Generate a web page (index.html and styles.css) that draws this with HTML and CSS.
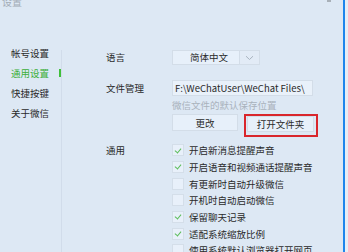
FILE: index.html
```html
<!DOCTYPE html>
<html lang="zh-CN">
<head>
<meta charset="utf-8">
<title>设置</title>
<link rel="stylesheet" href="styles.css">
</head>
<body>
<div class="window">
  <div class="title">设置</div>
  <div class="winbtn"></div>
  <div class="main">
    <nav class="side">
      <div class="nav-item">帐号设置</div>
      <div class="nav-item active">通用设置</div>
      <div class="nav-item">快捷按键</div>
      <div class="nav-item">关于微信</div>
    </nav>
    <div class="content">
      <div class="row row-lang">
        <div class="label">语言</div>
        <div class="select">
          <span class="select-value">简体中文</span>
          <span class="select-arrow"><svg width="9" height="6" viewBox="0 0 9 6"><path d="M1 1.2 L4.5 4.5 L8 1.2" fill="none" stroke="#a9b4c0" stroke-width="1"/></svg></span>
        </div>
      </div>
      <div class="row row-file">
        <div class="label">文件管理</div>
        <div class="file-col">
          <div class="path">F:\WeChatUser\WeChat Files\</div>
          <div class="hint">微信文件的默认保存位置</div>
          <div class="btns">
            <button class="btn">更改</button>
            <span class="highlight"><button class="btn">打开文件夹</button></span>
          </div>
        </div>
      </div>
      <div class="row row-general">
        <div class="label">通用</div>
        <ul class="checks">
          <li><span class="box on"></span>开启新消息提醒声音</li>
          <li><span class="box on"></span>开启语音和视频通话提醒声音</li>
          <li><span class="box"></span>有更新时自动升级微信</li>
          <li><span class="box"></span>开机时自动启动微信</li>
          <li><span class="box on"></span>保留聊天记录</li>
          <li><span class="box on"></span>适配系统缩放比例</li>
          <li><span class="box"></span>使用系统默认浏览器打开网页</li>
        </ul>
      </div>
    </div>
  </div>
</div>
</body>
</html>
```
FILE: styles.css
```css
html, body {
  margin: 0;
  padding: 0;
}
body {
  width: 348px;
  height: 252px;
  overflow: hidden;
  background: #e7eef6;
  font-family: "Noto Sans CJK SC", "Microsoft YaHei", sans-serif;
  font-size: 9.5px;
  color: #2a2a2a;
}
.window {
  position: relative;
  width: 343px;
  height: 252px;
  background: #dde8f4;
  border-right: 2px solid #1f86ec;
  display: flex;
  flex-direction: column;
}
.title {
  margin-top: -4px;
  padding-left: 2px;
  height: 11px;
  line-height: 11px;
  font-size: 10px;
  color: #a3acb6;
}
.winbtn {
  position: absolute;
  left: 327px;
  top: 0;
  width: 4px;
  height: 2px;
  background: #a8b0b8;
}
.main {
  display: flex;
  margin-top: 36px;
  flex: 1;
}
.side {
  position: relative;
  width: 61px;
  flex: none;
}
.side::after {
  content: "";
  position: absolute;
  left: 61px;
  top: 7px;
  bottom: 0;
  width: 1px;
  background: #d1dcea;
}
.nav-item {
  position: relative;
  height: 20px;
  line-height: 20px;
  padding-left: 11px;
}
.nav-item.active {
  color: #3caf3a;
}
.nav-item.active::after {
  content: "";
  position: absolute;
  left: 59px;
  top: 6px;
  width: 2px;
  height: 8px;
  background: #3fbf3a;
}
.content {
  margin-left: 45px;
  padding-top: 7px;
  display: flex;
  flex-direction: column;
}
.row {
  display: flex;
}
.label {
  width: 66px;
  flex: none;
}
.row-lang .label {
  line-height: 15px;
}
.select {
  display: flex;
  height: 15px;
}
.select-value {
  height: 13px;
  line-height: 13px;
  text-align: center;
  padding-left: 6px;
  box-sizing: content-box;
  width: 60px;
  background: #e7f0fa;
  border: 1px solid #d3dde8;
}
.select-arrow {
  width: 19px;
  height: 13px;
  border: 1px solid #d3dde8;
  border-left: none;
  display: flex;
  align-items: center;
  justify-content: center;
  background: #e2ebf6;
}
.row-file {
  margin-top: 15px;
}
.row-file .label {
  line-height: 16px;
}
.path {
  width: 137px;
  height: 14px;
  line-height: 14px;
  padding-left: 2px;
  background: #e9f1fa;
  border: 1px solid #d3dde8;
  white-space: nowrap;
  overflow: hidden;
}
.hint {
  margin-top: 3px;
  height: 12px;
  line-height: 12px;
  color: #a9b2bc;
}
.btns {
  display: flex;
  margin-top: 3px;
}
.btn {
  font: inherit;
  color: #2a2a2a;
  height: 17px;
  padding: 0;
  margin: 0;
  background: #e7f0fa;
  border: 1px solid #d3dde8;
  border-radius: 0;
}
.btns > .btn {
  width: 66px;
}
.highlight {
  margin-left: 6px;
  border: 2px solid #d9262c;
  padding: 0 2px 3px 1px;
  display: flex;
  align-items: flex-start;
}
.highlight .btn {
  width: 67px;
  height: 16px;
}
.row-general {
  margin-top: 5px;
}
.row-general .label {
  line-height: 16.67px;
}
.checks {
  list-style: none;
  margin: 0;
  padding: 0;
}
.checks li {
  display: flex;
  align-items: center;
  height: 16.67px;
  white-space: nowrap;
}
.box {
  width: 10px;
  height: 10px;
  margin-right: 5px;
  background: #e8f0fa;
  border: 1px solid #d4dee9;
  position: relative;
}
.box.on::after {
  content: "";
  position: absolute;
  left: 3px;
  top: 1.5px;
  width: 3px;
  height: 5px;
  border-right: 1px solid #5cbd5a;
  border-bottom: 1px solid #5cbd5a;
  transform: rotate(40deg);
}
```
